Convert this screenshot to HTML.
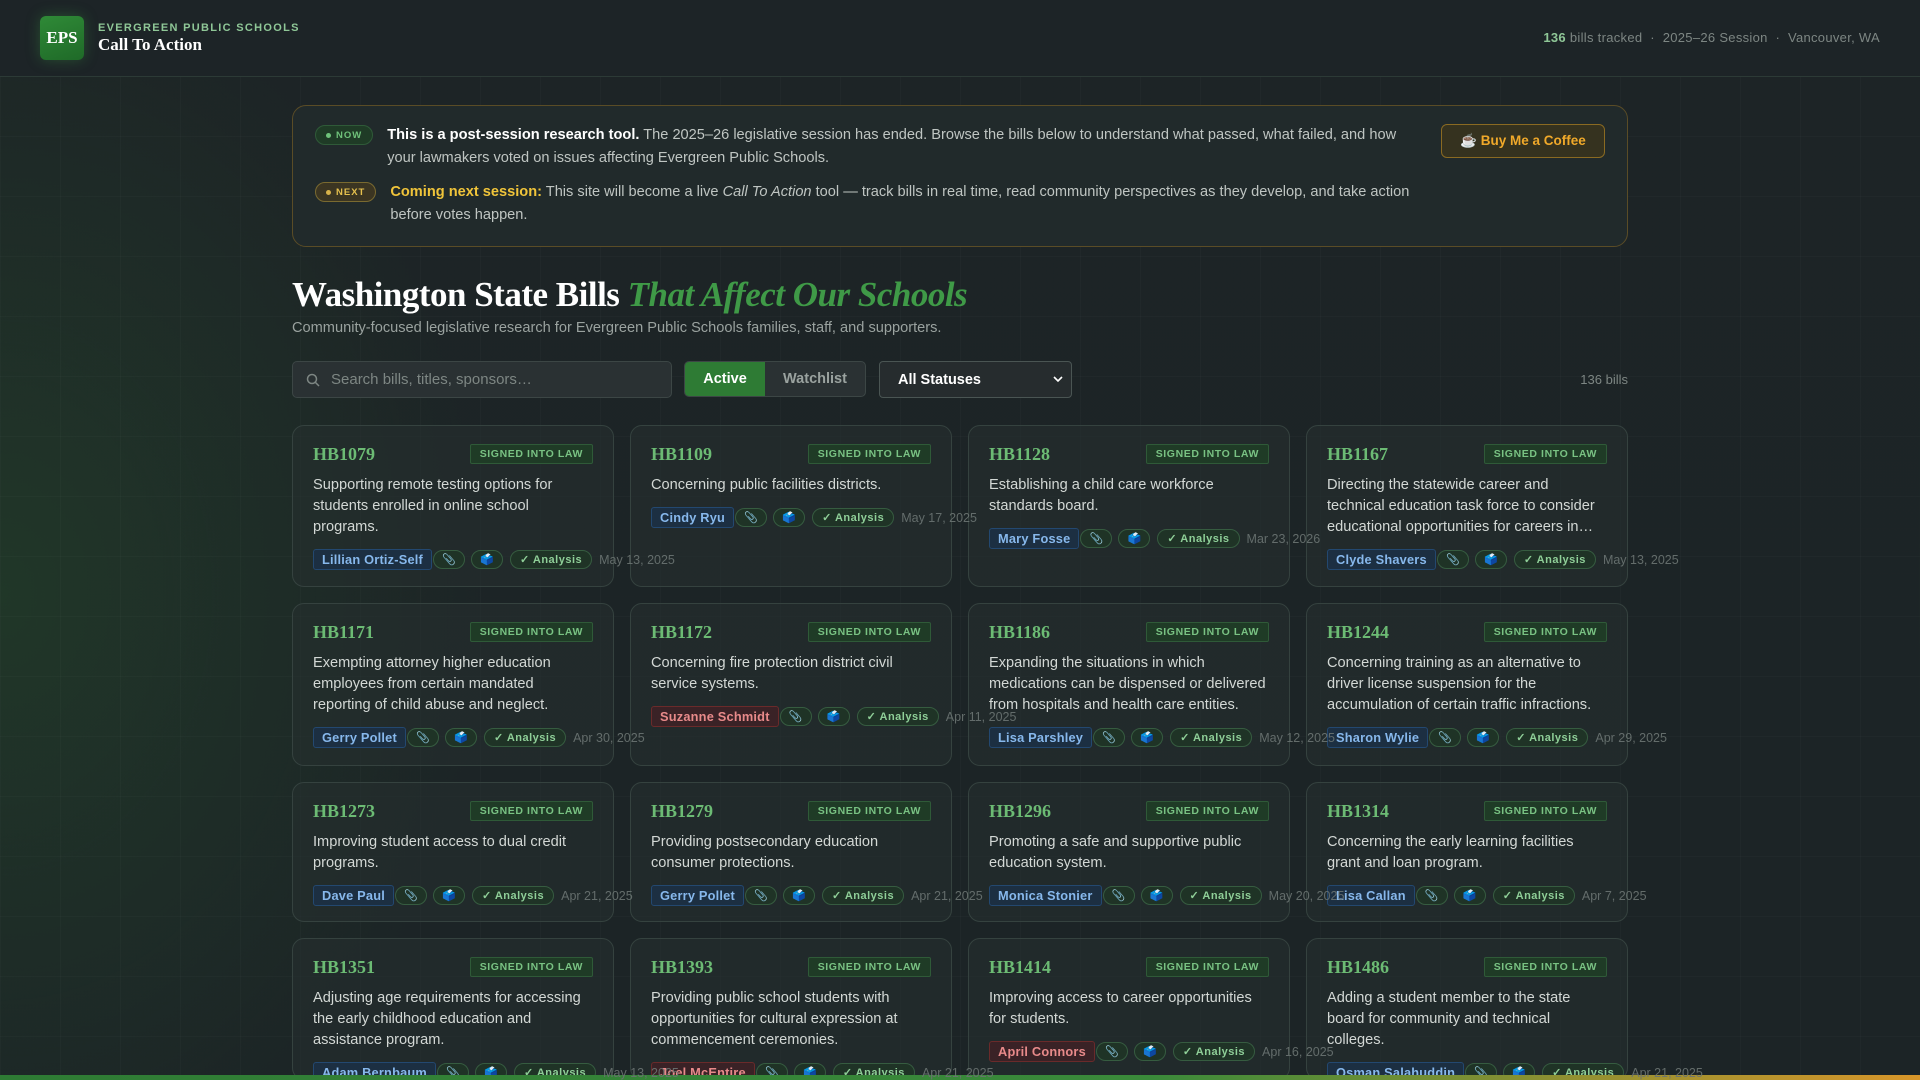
<!DOCTYPE html>
<html><head><meta charset="utf-8"><style>
*{box-sizing:border-box;margin:0;padding:0}
html,body{width:1920px;height:1080px;overflow:hidden}
body{font-family:"Liberation Sans",sans-serif;color:#d5dad6;
background:radial-gradient(ellipse 700px 900px at 0% 55%,rgba(40,90,45,.35),transparent 70%),
linear-gradient(180deg,#1d2426,#1c2426);position:relative}
.grid{position:absolute;left:0;right:0;top:76px;height:1004px;background-image:linear-gradient(rgba(255,255,255,.018) 1px,transparent 1px),linear-gradient(90deg,rgba(255,255,255,.018) 1px,transparent 1px);background-size:60px 60px;pointer-events:none}
header{height:77px;background:#1d2427;border-bottom:1px solid #2c3a36;position:relative}
.logo{position:absolute;left:40px;top:16px;width:44px;height:44px;border-radius:6px;background:linear-gradient(160deg,#2f8a37,#1f6a28);box-shadow:0 0 14px rgba(60,160,70,.35);color:#fff;font:bold 17px "Liberation Serif",serif;display:flex;align-items:center;justify-content:center}
.brand{position:absolute;left:98px;top:22px}
.brand .s{font-size:11px;letter-spacing:1.3px;color:#8fc797;font-weight:bold}
.brand .t{font:bold 17px "Liberation Serif",serif;color:#fff;margin-top:1px}
.hr{position:absolute;right:40px;top:30px;font-size:13px;color:#7d8683;letter-spacing:.3px}
.hr b{color:#8fc797}
.wrap{position:absolute;left:292px;width:1336px;top:105px}
.banner{border:1px solid #5a4c26;border-radius:14px;background:#212a2b;height:142px;position:relative;padding:18px 22px}
.row{display:flex;align-items:flex-start;font-size:14.6px;line-height:23px;color:#bfc5c2}
.pill{flex:none;height:20px;border-radius:10px;font-size:9.5px;font-weight:bold;letter-spacing:1px;display:flex;align-items:center;padding:0 10px;margin-top:1px;margin-right:14px}
.pill i{width:5px;height:5px;border-radius:50%;display:inline-block;margin-right:5px}
.now{background:#1f3b26;border:1px solid #2f5a38;color:#6fc27a}.now i{background:#6fc27a}
.next{background:#3b3522;border:1px solid #7a6a30;color:#e6c14e}.next i{background:#d8b24a}
.row strong{color:#fff}
.row .y{color:#f0c43a;font-weight:bold}
.btn{position:absolute;right:22px;top:18px;width:164px;height:34px;border:1px solid #8a6a22;background:#35321f;border-radius:6px;color:#f0a92a;font-weight:bold;font-size:13.5px;display:flex;align-items:center;justify-content:center}
h1{font:bold 35px "Liberation Serif",serif;color:#fff;margin-top:28px;letter-spacing:-.5px}
h1 em{color:#3f9a47}
.sub{font-size:14.6px;color:#9aa29f;margin-top:5px}
.ctl{position:relative;height:37px;margin-top:25px}
.search{position:absolute;left:0;width:380px;height:37px;border:1px solid #3c4645;background:#2a3133;border-radius:5px;color:#7d8683;font-size:15px;display:flex;align-items:center;padding-left:38px}
.search svg{position:absolute;left:13px;top:11px}
.tog{position:absolute;left:392px;width:182px;height:36px;border:1px solid #3c4645;border-radius:5px;overflow:hidden;display:flex;background:#2a3133;font-weight:bold;font-size:14.5px}
.tog div{display:flex;align-items:center;justify-content:center}
.tog .a{width:80px;background:#2e7b34;color:#fff}.tog .w{flex:1;color:#9aa29f}
.sel{position:absolute;left:587px;width:193px;height:37px;border:1px solid #4a5553;border-radius:4px;background:#262c2e;color:#fff;font-weight:bold;font-size:14.5px;display:flex;align-items:center;padding-left:18px}
.sel svg{position:absolute;right:8px;top:14px}
.cnt{position:absolute;right:0;top:11px;font-size:13px;color:#7d8683}
.cards{position:absolute;width:1336px}
.card{position:absolute;width:322px;border:1px solid #35423f;border-radius:12px;background:rgba(38,48,48,.55);padding:15px 20px}
.ch{display:flex;justify-content:space-between;align-items:center;height:26px}
.hb{font:bold 18px "Liberation Serif",serif;color:#6cbb74}
.st{height:20px;border:1px solid #2f5a38;background:#1f3b26;color:#79c283;font-size:10.5px;font-weight:bold;letter-spacing:.6px;padding:0 9px;display:flex;align-items:center;border-radius:2px}
.d{font-size:14.6px;line-height:21px;color:#d3d8d5;margin-top:8px}
.f{display:flex;align-items:center;white-space:nowrap;margin-top:11px;height:21px}
.f>*{flex:none}
.sp{height:21px;padding:0 8px;border:1px solid #234870;background:#1c2f42;color:#87b8ec;font-size:12.8px;font-weight:bold;border-radius:3px;display:flex;align-items:center;letter-spacing:.2px}
.sp.r{border-color:#6a2a2a;background:#3a2226;color:#e88a8a}
.ic{height:19px;width:32px;border:1px solid #365c40;background:#1f3326;border-radius:10px;display:flex;align-items:center;justify-content:center;font-size:11px;margin-left:6px}
.sp+.ic{margin-left:1px}
.an{height:19px;padding:0 9px;border:1px solid #365c40;background:#1f3326;border-radius:10px;display:flex;align-items:center;font-size:11px;font-weight:bold;color:#8fcf98;margin-left:7px;letter-spacing:.5px}
.dt{font-size:12.5px;color:#6b7472;margin-left:7px;position:relative;z-index:2;opacity:.9}
.bar{position:absolute;left:0;right:0;top:1075px;height:5px;background:linear-gradient(90deg,#2e7b34 0%,#3a8a3a 60%,#d8962a 100%)}
</style></head><body>
<div class="grid"></div>
<header>
<div class="logo">EPS</div>
<div class="brand"><div class="s">EVERGREEN PUBLIC SCHOOLS</div><div class="t">Call To Action</div></div>
<div class="hr"><b>136</b> bills tracked &nbsp;·&nbsp; 2025–26 Session &nbsp;·&nbsp; Vancouver, WA</div>
</header>
<div class="wrap">
<div class="banner">
<div class="row"><span class="pill now"><i></i>NOW</span><div style="width:1036px"><strong>This is a post-session research tool.</strong> The 2025–26 legislative session has ended. Browse the bills below to understand what passed, what failed, and how your lawmakers voted on issues affecting Evergreen Public Schools.</div></div>
<div class="row" style="margin-top:11px"><span class="pill next"><i></i>NEXT</span><div style="width:1030px"><span class="y">Coming next session:</span> This site will become a live <em>Call To Action</em> tool — track bills in real time, read community perspectives as they develop, and take action before votes happen.</div></div>
<div class="btn">☕ Buy Me a Coffee</div>
</div>
<h1>Washington State Bills <em>That Affect Our Schools</em></h1>
<div class="sub">Community-focused legislative research for Evergreen Public Schools families, staff, and supporters.</div>
<div class="ctl">
<div class="search"><svg width="14" height="14" viewBox="0 0 14 14"><circle cx="6" cy="6" r="4.5" fill="none" stroke="#7d8683" stroke-width="1.5"/><path d="M9.5 9.5L13 13" stroke="#7d8683" stroke-width="1.5"/></svg>Search bills, titles, sponsors…</div>
<div class="tog"><div class="a">Active</div><div class="w">Watchlist</div></div>
<div class="sel">All Statuses<svg width="10" height="7" viewBox="0 0 10 7"><path d="M1 1l4 4 4-4" fill="none" stroke="#fff" stroke-width="1.6"/></svg></div>
<div class="cnt">136 bills</div>
</div>
</div>
<div class="cards" style="left:292px;top:425px">
<div class="card" style="left:0;top:0;height:162px"><div class="ch"><span class="hb">HB1079</span><span class="st">SIGNED INTO LAW</span></div><div class="d">Supporting remote testing options for students enrolled in online school programs.</div><div class="f"><span class="sp">Lillian Ortiz-Self</span><span class="ic">📎</span><span class="ic">🗳️</span><span class="an">✓ Analysis</span><span class="dt">May 13, 2025</span></div></div>
<div class="card" style="left:338px;top:0;height:162px"><div class="ch"><span class="hb">HB1109</span><span class="st">SIGNED INTO LAW</span></div><div class="d">Concerning public facilities districts.</div><div class="f"><span class="sp">Cindy Ryu</span><span class="ic">📎</span><span class="ic">🗳️</span><span class="an">✓ Analysis</span><span class="dt">May 17, 2025</span></div></div>
<div class="card" style="left:676px;top:0;height:162px"><div class="ch"><span class="hb">HB1128</span><span class="st">SIGNED INTO LAW</span></div><div class="d">Establishing a child care workforce standards board.</div><div class="f"><span class="sp">Mary Fosse</span><span class="ic">📎</span><span class="ic">🗳️</span><span class="an">✓ Analysis</span><span class="dt">Mar 23, 2026</span></div></div>
<div class="card" style="left:1014px;top:0;height:162px"><div class="ch"><span class="hb">HB1167</span><span class="st">SIGNED INTO LAW</span></div><div class="d">Directing the statewide career and technical education task force to consider educational opportunities for careers in…</div><div class="f"><span class="sp">Clyde Shavers</span><span class="ic">📎</span><span class="ic">🗳️</span><span class="an">✓ Analysis</span><span class="dt">May 13, 2025</span></div></div>

<div class="card" style="left:0;top:178px;height:163px"><div class="ch"><span class="hb">HB1171</span><span class="st">SIGNED INTO LAW</span></div><div class="d">Exempting attorney higher education employees from certain mandated reporting of child abuse and neglect.</div><div class="f"><span class="sp">Gerry Pollet</span><span class="ic">📎</span><span class="ic">🗳️</span><span class="an">✓ Analysis</span><span class="dt">Apr 30, 2025</span></div></div>
<div class="card" style="left:338px;top:178px;height:163px"><div class="ch"><span class="hb">HB1172</span><span class="st">SIGNED INTO LAW</span></div><div class="d">Concerning fire protection district civil service systems.</div><div class="f"><span class="sp r">Suzanne Schmidt</span><span class="ic">📎</span><span class="ic">🗳️</span><span class="an">✓ Analysis</span><span class="dt">Apr 11, 2025</span></div></div>
<div class="card" style="left:676px;top:178px;height:163px"><div class="ch"><span class="hb">HB1186</span><span class="st">SIGNED INTO LAW</span></div><div class="d">Expanding the situations in which medications can be dispensed or delivered from hospitals and health care entities.</div><div class="f"><span class="sp">Lisa Parshley</span><span class="ic">📎</span><span class="ic">🗳️</span><span class="an">✓ Analysis</span><span class="dt">May 12, 2025</span></div></div>
<div class="card" style="left:1014px;top:178px;height:163px"><div class="ch"><span class="hb">HB1244</span><span class="st">SIGNED INTO LAW</span></div><div class="d">Concerning training as an alternative to driver license suspension for the accumulation of certain traffic infractions.</div><div class="f"><span class="sp">Sharon Wylie</span><span class="ic">📎</span><span class="ic">🗳️</span><span class="an">✓ Analysis</span><span class="dt">Apr 29, 2025</span></div></div>

<div class="card" style="left:0;top:357px;height:140px"><div class="ch"><span class="hb">HB1273</span><span class="st">SIGNED INTO LAW</span></div><div class="d">Improving student access to dual credit programs.</div><div class="f"><span class="sp">Dave Paul</span><span class="ic">📎</span><span class="ic">🗳️</span><span class="an">✓ Analysis</span><span class="dt">Apr 21, 2025</span></div></div>
<div class="card" style="left:338px;top:357px;height:140px"><div class="ch"><span class="hb">HB1279</span><span class="st">SIGNED INTO LAW</span></div><div class="d">Providing postsecondary education consumer protections.</div><div class="f"><span class="sp">Gerry Pollet</span><span class="ic">📎</span><span class="ic">🗳️</span><span class="an">✓ Analysis</span><span class="dt">Apr 21, 2025</span></div></div>
<div class="card" style="left:676px;top:357px;height:140px"><div class="ch"><span class="hb">HB1296</span><span class="st">SIGNED INTO LAW</span></div><div class="d">Promoting a safe and supportive public education system.</div><div class="f"><span class="sp">Monica Stonier</span><span class="ic">📎</span><span class="ic">🗳️</span><span class="an">✓ Analysis</span><span class="dt">May 20, 2025</span></div></div>
<div class="card" style="left:1014px;top:357px;height:140px"><div class="ch"><span class="hb">HB1314</span><span class="st">SIGNED INTO LAW</span></div><div class="d">Concerning the early learning facilities grant and loan program.</div><div class="f"><span class="sp">Lisa Callan</span><span class="ic">📎</span><span class="ic">🗳️</span><span class="an">✓ Analysis</span><span class="dt">Apr 7, 2025</span></div></div>

<div class="card" style="left:0;top:513px;height:142px"><div class="ch"><span class="hb">HB1351</span><span class="st">SIGNED INTO LAW</span></div><div class="d">Adjusting age requirements for accessing the early childhood education and assistance program.</div><div class="f"><span class="sp">Adam Bernbaum</span><span class="ic">📎</span><span class="ic">🗳️</span><span class="an">✓ Analysis</span><span class="dt">May 13, 2025</span></div></div>
<div class="card" style="left:338px;top:513px;height:142px"><div class="ch"><span class="hb">HB1393</span><span class="st">SIGNED INTO LAW</span></div><div class="d">Providing public school students with opportunities for cultural expression at commencement ceremonies.</div><div class="f"><span class="sp r">Joel McEntire</span><span class="ic">📎</span><span class="ic">🗳️</span><span class="an">✓ Analysis</span><span class="dt">Apr 21, 2025</span></div></div>
<div class="card" style="left:676px;top:513px;height:142px"><div class="ch"><span class="hb">HB1414</span><span class="st">SIGNED INTO LAW</span></div><div class="d">Improving access to career opportunities for students.</div><div class="f"><span class="sp r">April Connors</span><span class="ic">📎</span><span class="ic">🗳️</span><span class="an">✓ Analysis</span><span class="dt">Apr 16, 2025</span></div></div>
<div class="card" style="left:1014px;top:513px;height:142px"><div class="ch"><span class="hb">HB1486</span><span class="st">SIGNED INTO LAW</span></div><div class="d">Adding a student member to the state board for community and technical colleges.</div><div class="f"><span class="sp">Osman Salahuddin</span><span class="ic">📎</span><span class="ic">🗳️</span><span class="an">✓ Analysis</span><span class="dt">Apr 21, 2025</span></div></div>
</div>
<div class="bar"></div>
</body></html>
